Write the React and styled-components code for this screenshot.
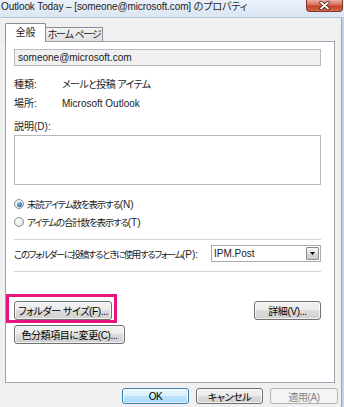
import React from "react";
import styled, { createGlobalStyle, css } from "styled-components";

const Global = createGlobalStyle`
  html, body { margin: 0; padding: 0; }
  body {
    background: #c9d8ea;
    font-family: "Liberation Sans", "Noto Sans CJK JP", sans-serif;
    font-size: 10px;
    color: #1b1b1b;
    font-feature-settings: "palt";
  }
  * { box-sizing: border-box; }
`;

const Window = styled.div`
  width: 344px;
  height: 407px;
  overflow: hidden;
  display: flex;
  flex-direction: column;
  background: linear-gradient(90deg, #dbe5f1, #c3d4e9);
`;

const TitleBar = styled.div`
  height: 17px;
  flex: none;
  display: flex;
  justify-content: space-between;
  align-items: flex-start;
  padding-left: 1px;
  background: linear-gradient(#eaf1fa, #dbe6f3);
`;

const TitleText = styled.div`
  line-height: 14px;
  font-size: 10px;
  color: #1e1e1e;
  white-space: nowrap;
  letter-spacing: -0.1px;
`;

const CloseButton = styled.div`
  width: 37px;
  height: 12px;
  margin-right: 1px;
  border: 1px solid #83352a;
  border-top: none;
  border-radius: 0 0 4px 4px;
  background: linear-gradient(#eab0a4 0%, #d86b58 45%, #c2412b 55%, #d26a4c 100%);
  display: flex;
  align-items: center;
  justify-content: center;
`;

const Body = styled.div`
  flex: 1;
  background: #f0f0f0;
  border-top: 1px solid #b6c3d3;
  border-right: 1px solid #9aa6b5;
  margin-right: 2px;
  padding: 5px 0 0 5px;
  display: flex;
  flex-direction: column;
`;

const Tabs = styled.div`
  height: 18px;
  display: flex;
  align-items: flex-end;
  position: relative;
  z-index: 1;
`;

const Tab = styled.div`
  border: 1px solid #898c95;
  border-bottom: none;
  text-align: center;
  white-space: nowrap;
  ${(p) =>
    p.$active
      ? css`
          width: 41px;
          height: 19px;
          margin-bottom: -1px;
          background: #fff;
          line-height: 17px;
          border-radius: 2px 2px 0 0;
        `
      : css`
          width: 57px;
          height: 14px;
          border-left: none;
          background: linear-gradient(#f3f3f3, #e0e0e0);
          line-height: 13px;
          letter-spacing: -1.2px;
        `}
`;

const Panel = styled.div`
  width: 330px;
  height: 342px;
  background: #fff;
  border: 1px solid #9ea3ad;
  padding: 0 13px 0 8px;
  display: flex;
  flex-direction: column;
`;

const ReadOnlyBox = styled.div`
  margin-top: 7px;
  height: 17px;
  background: #f0f0f0;
  border: 1px solid #b7b9be;
  padding-left: 3px;
  line-height: 15px;
`;

const InfoRow = styled.div`
  display: flex;
  height: 18px;
  line-height: 18px;
  margin-top: ${(p) => p.$top}px;
`;

const InfoLabel = styled.span`
  width: 48px;
  flex: none;
`;

const InfoValue = styled.span`
  letter-spacing: ${(p) => (p.$tight ? "-0.6px" : "0")};
  white-space: nowrap;
`;

const FieldLabel = styled.div`
  margin-top: 6px;
  height: 16px;
  line-height: 16px;
`;

const TextArea = styled.div`
  height: 50px;
  border: 1px solid #b7b9be;
  background: #fff;
`;

const RadioRow = styled.label`
  display: flex;
  align-items: center;
  height: 18px;
  margin-top: ${(p) => p.$top}px;
  font-size: 9.5px;
  letter-spacing: -1.2px;
  white-space: nowrap;
`;

const Accel = styled.span`
  letter-spacing: 0;
  font-size: 10px;
`;

const RadioCircle = styled.span`
  width: 10px;
  height: 10px;
  border-radius: 50%;
  border: 1px solid #8e8f8f;
  background: radial-gradient(circle at 40% 35%, #ffffff, #dcdcdc);
  margin-right: 3px;
  display: flex;
  align-items: center;
  justify-content: center;
  flex: none;
`;

const RadioDot = styled.span`
  width: 5px;
  height: 5px;
  border-radius: 50%;
  background: radial-gradient(circle at 40% 35%, #8fd0ff, #1b5cab 70%);
`;

const Separator = styled.div`
  height: 1px;
  background: #d3d3d3;
  margin-top: ${(p) => p.$top}px;
`;

const FormRow = styled.div`
  display: flex;
  align-items: center;
  height: 17px;
  margin-top: 5px;
`;

const FormLabel = styled.span`
  white-space: nowrap;
  font-size: 9.5px;
  letter-spacing: -1.4px;
`;

const Select = styled.div`
  margin-left: auto;
  flex: none;
  width: 110px;
  height: 17px;
  border: 1px solid #a9abb0;
  background: #fff;
  display: flex;
  align-items: center;
  padding-left: 2px;
`;

const SelectArrow = styled.div`
  margin-left: auto;
  margin-right: 1px;
  width: 13px;
  height: 13px;
  border: 1px solid #8c8c8c;
  border-radius: 1px;
  background: linear-gradient(#f6f6f6, #e4e4e4 50%, #d4d4d4 50%, #cdcdcd);
  display: flex;
  align-items: center;
  justify-content: center;
`;

const ButtonRow = styled.div`
  display: flex;
  justify-content: ${(p) => p.$justify || "flex-start"};
  align-items: flex-start;
  gap: ${(p) => p.$gap || 0}px;
  margin-top: ${(p) => p.$top}px;
  margin-right: ${(p) => p.$right || 0}px;
`;

const Button = styled.button`
  width: ${(p) => p.$width}px;
  height: ${(p) => p.$height || 19}px;
  padding: 0;
  font: inherit;
  font-size: 10px;
  letter-spacing: -0.4px;
  color: #000;
  border: 1px solid #707070;
  border-radius: 3px;
  background: linear-gradient(#f2f2f2 0%, #ebebeb 50%, #dddddd 50%, #cfcfcf 100%);
  box-shadow: inset 0 0 0 1px rgba(255, 255, 255, 0.7);
  white-space: nowrap;
  ${(p) =>
    p.$default &&
    css`
      border-color: #3c7fb1;
      background: linear-gradient(#eaf6fd 0%, #d9f0fc 50%, #bee6fd 50%, #a7d9f5 100%);
    `}
  ${(p) =>
    p.$disabled &&
    css`
      border-color: #adb2b5;
      background: #f4f4f4;
      color: #838383;
      box-shadow: none;
    `}
`;

const Highlight = styled.div`
  position: relative;
  display: flex;
`;

const HighlightFrame = styled.div`
  position: absolute;
  top: -7px;
  left: -8px;
  right: -5px;
  bottom: -3px;
  border: 3px solid #e5147e;
  pointer-events: none;
`;

export default function App() {
  return (
    <>
      <Global />
      <Window>
        <TitleBar>
          <TitleText>Outlook Today – [someone@microsoft.com] のプロパティ</TitleText>
          <CloseButton>
            <svg width="11" height="9" viewBox="0 0 11 9">
              <path d="M2 1.5 L9 7.5 M9 1.5 L2 7.5" stroke="#4a1a12" strokeWidth="3.4" strokeLinecap="round" />
              <path d="M2 1.5 L9 7.5 M9 1.5 L2 7.5" stroke="#ffffff" strokeWidth="1.8" strokeLinecap="round" />
            </svg>
          </CloseButton>
        </TitleBar>
        <Body>
          <Tabs>
            <Tab $active>全般</Tab>
            <Tab>ホーム ページ</Tab>
          </Tabs>
          <Panel>
            <ReadOnlyBox>someone@microsoft.com</ReadOnlyBox>
            <InfoRow $top={10}>
              <InfoLabel>種類:</InfoLabel>
              <InfoValue $tight>メールと投稿 アイテム</InfoValue>
            </InfoRow>
            <InfoRow $top={1}>
              <InfoLabel>場所:</InfoLabel>
              <InfoValue>Microsoft Outlook</InfoValue>
            </InfoRow>
            <FieldLabel>説明(D):</FieldLabel>
            <TextArea />
            <RadioRow $top={10}>
              <RadioCircle>
                <RadioDot />
              </RadioCircle>
              未読アイテム数を表示する<Accel>(N)</Accel>
            </RadioRow>
            <RadioRow $top={0}>
              <RadioCircle />
              アイテムの合計数を表示する<Accel>(T)</Accel>
            </RadioRow>
            <Separator $top={8} />
            <FormRow>
              <FormLabel>
                このフォルダーに投稿するときに使用するフォーム<Accel>(P):</Accel>
              </FormLabel>
              <Select>
                <span>IPM.Post</span>
                <SelectArrow>
                  <svg width="5" height="3" viewBox="0 0 5 3">
                    <path d="M0 0 H5 L2.5 3 Z" fill="#000" />
                  </svg>
                </SelectArrow>
              </Select>
            </FormRow>
            <Separator $top={9} />
            <ButtonRow $top={29} $justify="space-between">
              <Highlight>
                <Button $width={98}>フォルダー サイズ(F)...</Button>
                <HighlightFrame />
              </Highlight>
              <Button $width={67}>詳細(V)...</Button>
            </ButtonRow>
            <ButtonRow $top={5}>
              <Button $width={111}>色分類項目に変更(C)...</Button>
            </ButtonRow>
          </Panel>
          <ButtonRow $top={5} $justify="flex-end" $gap={7} $right={3}>
            <Button $width={67} $height={16} $default>OK</Button>
            <Button $width={67} $height={16}>キャンセル</Button>
            <Button $width={68} $height={16} $disabled>適用(A)</Button>
          </ButtonRow>
        </Body>
      </Window>
    </>
  );
}
